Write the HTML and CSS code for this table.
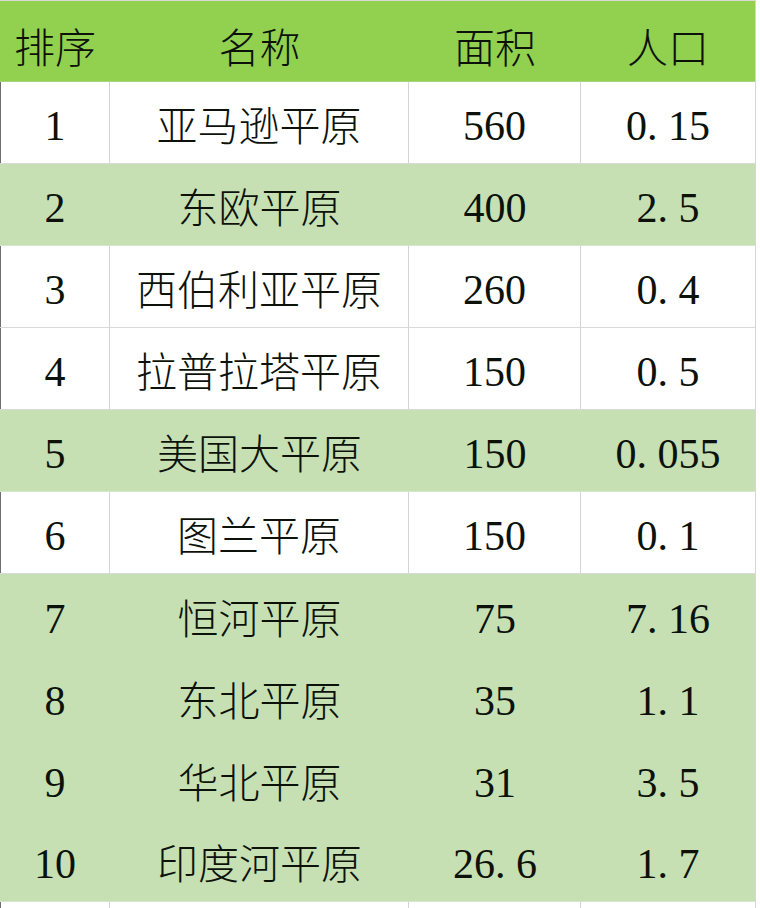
FILE: index.html
```html
<!DOCTYPE html>
<html lang="zh">
<head>
<meta charset="utf-8">
<link rel="stylesheet" href="styles.css">
</head>
<body>
<div class="sheet">
  <div class="table">
    <div class="row head">
      <div class="cell">排序</div>
      <div class="cell">名称</div>
      <div class="cell">面积</div>
      <div class="cell">人口</div>
    </div>
    <div class="row white">
      <div class="cell num">1</div>
      <div class="cell">亚马逊平原</div>
      <div class="cell num">560</div>
      <div class="cell num">0<span class="dot">.</span>15</div>
    </div>
    <div class="row green">
      <div class="cell num">2</div>
      <div class="cell">东欧平原</div>
      <div class="cell num">400</div>
      <div class="cell num">2<span class="dot">.</span>5</div>
    </div>
    <div class="row white">
      <div class="cell num">3</div>
      <div class="cell">西伯利亚平原</div>
      <div class="cell num">260</div>
      <div class="cell num">0<span class="dot">.</span>4</div>
    </div>
    <div class="row white">
      <div class="cell num">4</div>
      <div class="cell">拉普拉塔平原</div>
      <div class="cell num">150</div>
      <div class="cell num">0<span class="dot">.</span>5</div>
    </div>
    <div class="row green">
      <div class="cell num">5</div>
      <div class="cell">美国大平原</div>
      <div class="cell num">150</div>
      <div class="cell num">0<span class="dot">.</span>055</div>
    </div>
    <div class="row white">
      <div class="cell num">6</div>
      <div class="cell">图兰平原</div>
      <div class="cell num">150</div>
      <div class="cell num">0<span class="dot">.</span>1</div>
    </div>
    <div class="row green joined">
      <div class="cell num">7</div>
      <div class="cell">恒河平原</div>
      <div class="cell num">75</div>
      <div class="cell num">7<span class="dot">.</span>16</div>
    </div>
    <div class="row green joined">
      <div class="cell num">8</div>
      <div class="cell">东北平原</div>
      <div class="cell num">35</div>
      <div class="cell num">1<span class="dot">.</span>1</div>
    </div>
    <div class="row green joined">
      <div class="cell num">9</div>
      <div class="cell">华北平原</div>
      <div class="cell num">31</div>
      <div class="cell num">3<span class="dot">.</span>5</div>
    </div>
    <div class="row green">
      <div class="cell num">10</div>
      <div class="cell">印度河平原</div>
      <div class="cell num">26<span class="dot">.</span>6</div>
      <div class="cell num">1<span class="dot">.</span>7</div>
    </div>
    <div class="row white tail">
      <div class="cell"></div>
      <div class="cell"></div>
      <div class="cell"></div>
      <div class="cell"></div>
    </div>
  </div>
</div>
</body>
</html>
```

FILE: styles.css
```css
html, body {
  margin: 0;
  padding: 0;
  background: #ffffff;
}

.sheet {
  width: 760px;
  height: 908px;
  overflow: hidden;
  background: #ffffff;
}

.table {
  width: 755px;
  border-right: 1px solid #d6d6d6;
  border-top: 1px solid #d9d9d9;
  font-family: "Noto Sans CJK SC", "Noto Sans", sans-serif;
  font-weight: 300;
  font-size: 41px;
  color: #0c120a;
}

.row {
  display: grid;
  grid-template-columns: 110px 299px 172px 174px;
  height: 82px;
  box-sizing: border-box;
}

.cell {
  display: flex;
  align-items: center;
  justify-content: center;
  line-height: 1;
  box-sizing: border-box;
  padding-top: 2px;
}

.num {
  font-family: "Liberation Serif", "Noto Sans CJK SC", serif;
  font-weight: 400;
  font-size: 42px;
  padding-top: 7px;
}

.dot {
  letter-spacing: 0.25em;
}

.head {
  background: #92d050;
  height: 81px;
  border-bottom: 1px solid #a9d47a;
}

.head .cell {
  padding-top: 8px;
}

.white {
  background: #ffffff;
  border-bottom: 1px solid #d9d9d9;
}

.white .cell {
  border-right: 1px solid #d4d4d4;
}

.white .cell:first-child {
  border-left: 1px solid #6f6f6f;
}

.white .cell:last-child {
  border-right: none;
}

.green {
  background: #c6e0b4;
  border-bottom: 1px solid #d6e6cc;
}

.green.joined {
  border-bottom: none;
}

.tail {
  height: 20px;
}
```
